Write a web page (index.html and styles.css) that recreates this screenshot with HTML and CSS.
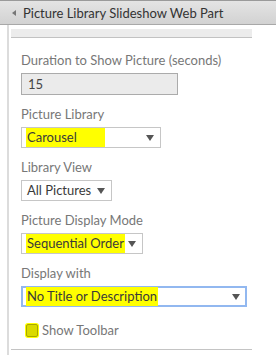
FILE: index.html
```html
<!DOCTYPE html>
<html lang="en">
<head>
  <meta charset="UTF-8">
  <title>Picture Library Slideshow Web Part</title>
  <meta name="viewport" content="width=device-width, initial-scale=1.0">
  <link rel="stylesheet" href="styles.css">
</head>
<body>

<div class="panel">
  <div class="head"><span class="arrow"></span>Picture Library Slideshow Web Part</div>
  <div class="main">
    <div class="bar"></div>

    <div class="field first">
      <label>Duration to Show Picture (seconds)</label>
      <div class="input">15</div>
    </div>

    <div class="field">
      <label>Picture Library</label>
      <div class="select w-lib"><span class="mark">Carousel</span><span class="caret"></span></div>
    </div>

    <div class="field">
      <label>Library View</label>
      <div class="select w-view"><span>All Pictures</span><span class="caret"></span></div>
    </div>

    <div class="field">
      <label>Picture Display Mode</label>
      <div class="select w-mode"><span class="mark">Sequential Order</span><span class="caret"></span></div>
    </div>

    <div class="field">
      <label>Display with</label>
      <div class="select w-disp focus"><span class="mark">No Title or Description</span><span class="caret"></span></div>
    </div>

    <div class="check"><span class="box"></span>Show Toolbar</div>

    <div class="foot"></div>
  </div>
</div>

</body>
</html>
```

FILE: styles.css
```css
body { margin: 0; background: #fff; font-family: Lato, "Open Sans", sans-serif; font-size: 13px; }
.panel { width: 276px; height: 355px; overflow: hidden; }
.head { height: 23px; border-top: 1px solid #9a9a9a; border-bottom: 1px solid #a8a8a8; background: linear-gradient(#e4e4e4, #d2d2d2); color: #333; padding-left: 12px; display: flex; align-items: center; }
.arrow { width: 0; height: 0; border-top: 3px solid transparent; border-bottom: 3px solid transparent; border-right: 4px solid #777; margin-right: 7px; }
.main { margin-left: 7px; border-left: 2px solid #dcdcdc; height: 330px; padding-left: 2px; padding-top: 4px; position: relative; }
.bar { width: 241px; height: 8px; background: #ececec; border-bottom: 1px solid #c2c2c2; }
.field { padding-left: 10px; margin-top: 11px; }
.field.first { margin-top: 14px; }
label { display: block; color: #777; line-height: 16px; margin-bottom: 5px; }
.input { width: 149px; height: 20px; line-height: 20px; background: #ebebeb; border: 1px solid #ababab; padding-left: 6px; color: #444; }
.select { height: 19px; line-height: 19px; border: 1px solid #c6c6c6; display: flex; align-items: center; justify-content: space-between; padding: 0 6px 0 5px; color: #3a3a3a; }
.w-lib { width: 127px; }
.w-view { width: 78px; }
.w-mode { width: 109px; }
.w-disp { width: 213px; height: 17px; border: 2px solid #92b8f0; padding-left: 4px; padding-right: 5px; }
.caret { width: 0; height: 0; border-left: 4px solid transparent; border-right: 4px solid transparent; border-top: 6px solid #555; }
.mark { background: #ffff00; padding: 0 1px; margin-left: -1px; }
.w-lib .mark { padding-right: 28px; }
.check { display: flex; align-items: center; padding-left: 15px; margin-top: 15px; color: #777; }
.box { width: 10px; height: 11px; border: 1px solid #a8a800; border-radius: 2px; background: #dada00; box-shadow: 0 0 0 1px #ffff00; margin-right: 4px; }
.foot { position: absolute; left: 2px; top: 324px; width: 241px; border-top: 1px solid #c4c4c4; }
```
